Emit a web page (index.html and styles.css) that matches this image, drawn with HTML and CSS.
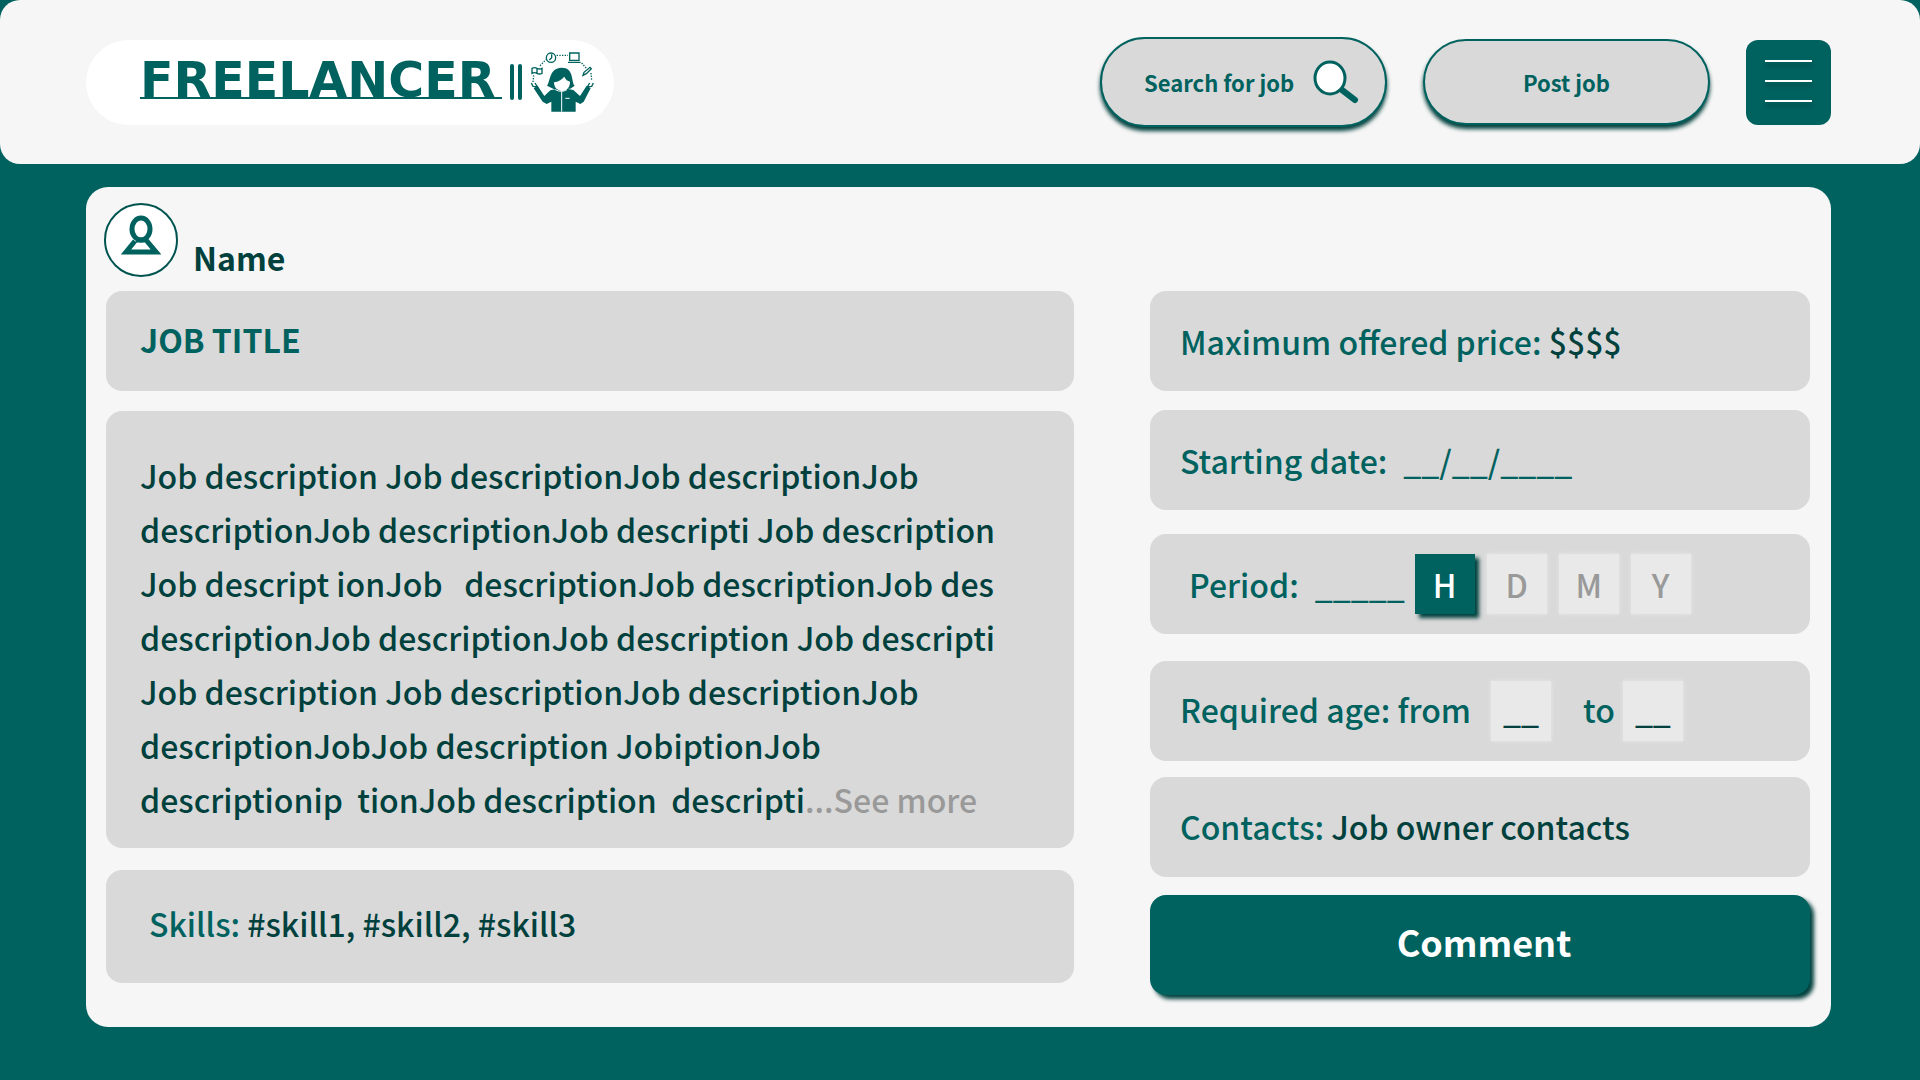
FILE: index.html
```html
<!DOCTYPE html>
<html lang="en">
<head>
<meta charset="utf-8">
<meta name="viewport" content="width=device-width, initial-scale=1">
<title>Freelancer - Job</title>
<link rel="stylesheet" href="styles.css">
</head>
<body>
<header class="topbar">
  <a class="logo" href="#" aria-label="Freelancer home">
    <span class="logo-text">FREELANCER</span>
    <svg class="logo-bars" viewBox="0 0 12 36" aria-hidden="true"><path d="M2 2v32M10 2v32"/></svg>
    <svg class="logo-figure" viewBox="30 18 192 186" aria-hidden="true">
      <g fill="none" stroke="#00625f" stroke-width="4">
        <circle cx="93" cy="38" r="14"/><path d="M95 28v10l-7 7"/>
        <path d="M149 24h28v22h-28zM144 52h38"/>
        <path d="M36 70q8-4 15 0t15 0v15q-8 4-15 0t-15 0zM51 70v15"/>
        <path d="M189 91l3-9 18-15 4 4-15 15z"/>
        <path d="M110 31h34M60 62l18-18M185 54l14 16M41 91l-2 20M213 84l2 24" stroke-dasharray="4 4"/>
        <path d="M34 114l5 10 13 2-7-12M220 114l-5 10-13 2 7-12"/>
      </g>
      <g fill="#00625f">
        <path d="M81 122c10-10 6-54 44-54 38 0 28 42 39 54l-13 9-50 1z"/>
        <path d="M41 130l12-8 20 31 18-17 22-5 13 8 14-8 20 4 20 18 20-31 12 8-21 40-10 7-14-7v30H94v-30l-14 7-12-7z"/>
      </g>
      <path fill="#fff" d="M102 112c13-2 23-8 31-17 4 9 10 13 17 15 0 20-12 27-25 27s-23-9-23-25z"/>
      <path d="M106 134q18 10 35 0M125 139v61M136 160h13" fill="none" stroke="#fff" stroke-width="3"/>
    </svg>
  </a>
  <nav class="actions">
    <button class="pill pill-search" type="button">Search for job
      <svg class="search-icon" viewBox="0 0 48 46" aria-hidden="true"><path d="M30 31l13 10" stroke="#00625f" stroke-width="6" stroke-linecap="round"/><ellipse cx="18" cy="19" rx="15" ry="16" fill="#fff" stroke="#00625f" stroke-width="3"/></svg>
    </button>
    <button class="pill" type="button">Post job</button>
    <button class="menu" type="button" aria-label="Menu"><span></span><span></span><span></span></button>
  </nav>
</header>

<main class="card">
  <div class="owner">
    <span class="avatar">
      <svg viewBox="0 0 40 40" aria-hidden="true" fill="none" stroke="#00625f" stroke-width="5"><ellipse cx="20" cy="14" rx="9" ry="11"/><path d="M15 25h10l10 12H5l9-11"/></svg>
    </span>
    <h2 class="name">Name</h2>
  </div>
  <div class="columns">
    <section class="col-main">
      <div class="panel"><h1 class="title">JOB TITLE</h1></div>
      <div class="panel description"><p>Job description Job descriptionJob descriptionJob
descriptionJob descriptionJob descripti Job description
Job descript ionJob   descriptionJob descriptionJob des
descriptionJob descriptionJob description Job descripti
Job description Job descriptionJob descriptionJob
descriptionJobJob description JobiptionJob
descriptionip  tionJob description  descripti<a class="more" href="#">...See more</a></p></div>
      <div class="panel skills"><p><span class="label">Skills:</span> #skill1, #skill2, #skill3</p></div>
    </section>
    <form class="col-side">
      <div class="panel"><p><span class="label">Maximum offered price:</span> $$$$</p></div>
      <div class="panel start"><label class="label" for="start">Starting date:</label><input class="blank date" id="start" type="text" value="__/__/____"></div>
      <div class="panel period">
        <label class="label" for="period">Period:</label><input class="blank length" id="period" type="text" value="_____">
        <div class="units" role="group" aria-label="Period unit">
          <button class="unit active" type="button" aria-pressed="true">H</button>
          <button class="unit" type="button" aria-pressed="false">D</button>
          <button class="unit" type="button" aria-pressed="false">M</button>
          <button class="unit" type="button" aria-pressed="false">Y</button>
        </div>
      </div>
      <div class="panel age">
        <label class="label" for="from">Required age: from</label><input class="box" id="from" type="text" value="__">
        <label class="label to" for="to">to</label><input class="box" id="to" type="text" value="__">
      </div>
      <div class="panel contacts"><p><span class="label">Contacts:</span> Job owner contacts</p></div>
      <button class="comment" type="button">Comment</button>
    </form>
  </div>
</main>
</body>
</html>
```
FILE: styles.css
```css
* { box-sizing: border-box; }

body {
  margin: 0;
  min-height: 100vh;
  background: #00625f;
  color: #00403d;
  font-family: "Noto Sans CJK SC", "Noto Sans", sans-serif;
  font-size: 32px;
  font-weight: 500;
  line-height: 54px;
}

button, input { font: inherit; border: 0; padding: 0; margin: 0; }
button { cursor: pointer; }
h1, h2, p { margin: 0; }

.topbar {
  display: flex;
  align-items: center;
  justify-content: space-between;
  min-height: 164px;
  padding: 0 89px 0 86px;
  background: #f6f6f6;
  border-radius: 20px;
}

.logo {
  display: flex;
  align-items: center;
  height: 85px;
  padding: 0 20px 0 54px;
  background: #fff;
  border-radius: 43px;
  color: #00625f;
  text-decoration: none;
}
.logo-text {
  width: 362px;
  border-bottom: 2px solid #00625f;
  font-family: "DejaVu Sans", sans-serif;
  font-size: 49px;
  font-weight: 700;
  line-height: 32px;
}
.logo-bars { width: 12px; height: 36px; margin: 0 8px; fill: none; stroke: #00625f; stroke-width: 4; stroke-linecap: round; }
.logo-figure { width: 64px; height: 62px; }

.actions { display: flex; align-items: center; gap: 36px; }
.pill {
  width: 287px;
  height: 86px;
  border: 2px solid #00625f;
  border-radius: 45px;
  background: #d9d9d9;
  box-shadow: 0 4px 4px #00403d;
  color: #00625f;
  font-size: 22px;
  font-weight: 700;
}
.pill-search {
  display: flex;
  align-items: center;
  justify-content: space-between;
  height: 90px;
  padding: 0 25px 0 42px;
}
.search-icon { width: 48px; height: 46px; }
.menu {
  display: flex;
  flex-direction: column;
  align-items: center;
  justify-content: center;
  gap: 18px;
  width: 85px;
  height: 85px;
  padding-bottom: 2px;
  border-radius: 12px;
  background: #00625f;
}
.menu span { width: 47px; height: 2px; background: #fff; box-shadow: 0 4px 4px rgba(0, 0, 0, 0.25); }

.card {
  margin: 23px 89px 53px 86px;
  padding: 16px 21px 32px 20px;
  background: #f6f6f6;
  border-radius: 22px;
}
.owner { display: flex; gap: 15px; height: 88px; }
.avatar {
  display: flex;
  justify-content: center;
  width: 74px;
  height: 74px;
  margin-left: -2px;
  padding-top: 10px;
  border: 2px solid #005450;
  border-radius: 50%;
  background: #fff;
}
.avatar svg { width: 40px; height: 40px; }
.name { padding-top: 27px; font-size: 32px; line-height: 54px; }

.columns { display: grid; grid-template-columns: 968fr 660fr; gap: 76px; }
.col-main, .col-side { display: flex; flex-direction: column; }

.panel {
  display: flex;
  align-items: center;
  min-height: 100px;
  padding: 0 30px;
  border-radius: 16px;
  background: #d9d9d9;
}
.label { color: #00625f; white-space: pre; }
.col-main .panel { padding: 0 34px 4px; }
.title { color: #00625f; font-size: 32px; }
.col-main .description { min-height: 437px; margin: 20px 0 22px; padding: 35px 34px 21px; }
.description p { white-space: pre-wrap; }
.more { color: #999; text-decoration: none; }
.col-main .skills { min-height: 113px; padding: 0 34px 8px 43px; }

.start { margin: 19px 0 24px; }
.blank { background: none; color: #00625f; }
.date { width: 200px; margin-left: 16px; }
.panel.period { padding: 0 30px 0 39px; }
.length { width: 92px; margin-left: 16px; }
.units { display: flex; gap: 12px; margin-left: 8px; }
.unit, .box {
  width: 60px;
  height: 60px;
  background: #e9e9e9;
  box-shadow: 0 0 4px #e9e9e9;
  color: #999;
  text-align: center;
}
.unit.active { background: #00625f; box-shadow: 4px 4px 4px #00403d; color: #fff; }
.panel.age { margin: 27px 0 16px; }
.age .label, .box { padding-bottom: 4px; }
.box { margin-left: 20px; color: #00403d; }
.to { margin-left: 32px; }
.to + .box { margin-left: 8px; }
.panel.contacts { padding-bottom: 2px; }
.comment {
  min-height: 100px;
  margin-top: 18px;
  padding: 0 0 8px 8px;
  border-radius: 16px;
  background: #00625f;
  box-shadow: 4px 4px 4px #00403d;
  color: #fff;
  font-size: 36px;
  font-weight: 700;
}
```
